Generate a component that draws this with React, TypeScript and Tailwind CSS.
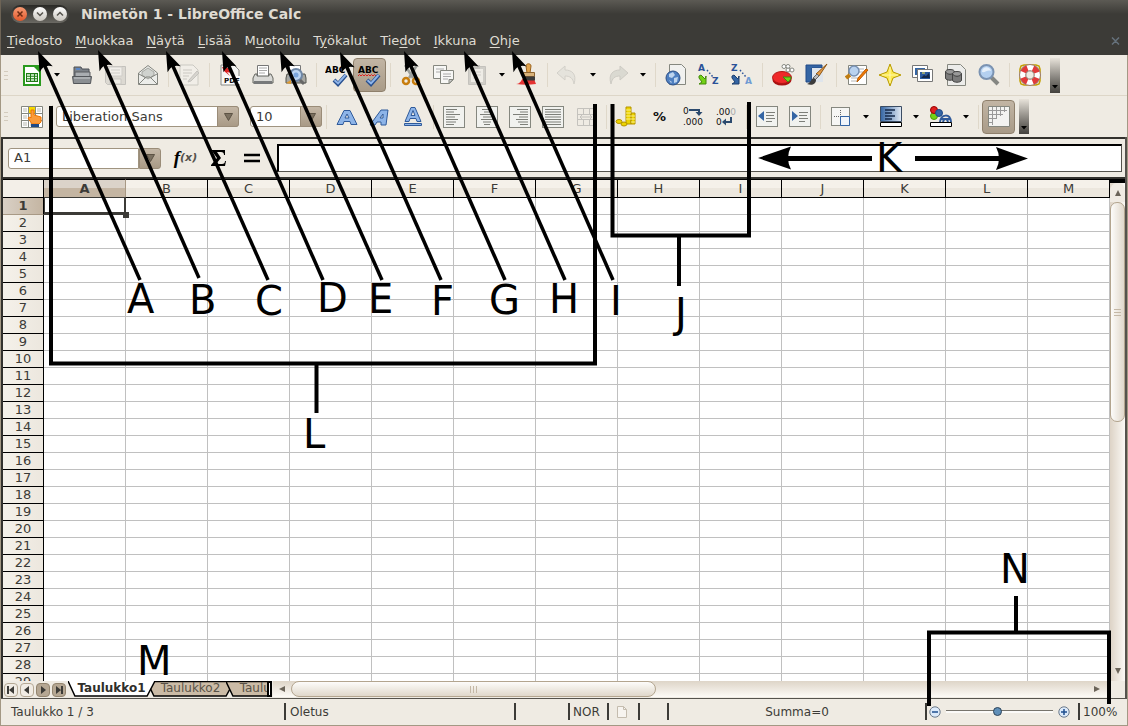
import { useState } from "react";
import type { ReactNode } from "react";

const MENUS: [string, string, string][] = [
  ["", "T", "iedosto"],
  ["", "M", "uokkaa"],
  ["", "N", "äytä"],
  ["", "L", "isää"],
  ["M", "u", "otoilu"],
  ["T", "y", "ökalut"],
  ["Tie", "d", "ot"],
  ["", "I", "kkuna"],
  ["", "O", "hje"],
];
const COLUMNS = "ABCDEFGHIJKLM".split("");
const ROWS = Array.from({ length: 29 }, (_, i) => i + 1);

function Icon({ children }: { children: ReactNode }) {
  return (
    <svg width="24" height="24" viewBox="0 0 24 24" fill="none" aria-hidden="true" className="shrink-0">
      {children}
    </svg>
  );
}

function Tool({ label, children, pressed, faded }: { label: string; children: ReactNode; pressed?: boolean; faded?: boolean }) {
  return (
    <button
      type="button"
      aria-label={label}
      aria-pressed={pressed}
      className={
        pressed
          ? "flex h-[34px] w-[33px] shrink-0 items-center justify-center rounded border border-[#8f806c] bg-linear-to-b from-[#c2b5a4] to-[#a99b88]"
          : faded
            ? "flex h-8 w-[33px] shrink-0 items-center justify-center opacity-35"
            : "flex h-8 w-[33px] shrink-0 items-center justify-center"
      }
    >
      <Icon>{children}</Icon>
    </button>
  );
}

function Drop({ label }: { label: string }) {
  return (
    <button type="button" aria-label={label} className="flex h-8 w-[17px] shrink-0 items-center justify-center">
      <svg width="6" height="4" viewBox="0 0 6 4" aria-hidden="true">
        <path d="M0 0h6L3 3.5z" fill="#000" />
      </svg>
    </button>
  );
}

function Sep() {
  return (
    <div className="flex w-2 shrink-0 justify-center">
      <div className="h-6 w-px bg-[#dfd8ca]" />
    </div>
  );
}

function Grip() {
  return (
    <div className="flex w-[14px] shrink-0 flex-col gap-[3px] pl-[3px]">
      <div className="h-px w-1 bg-[#d3cbbd]" />
      <div className="h-px w-1 bg-[#d3cbbd]" />
      <div className="h-px w-1 bg-[#d3cbbd]" />
    </div>
  );
}

function Overflow({ label }: { label: string }) {
  return (
    <button
      type="button"
      aria-label={label}
      className="ml-1 flex h-[35px] w-[10px] shrink-0 items-end justify-center bg-linear-to-b from-[#e8e3da] to-[#44423e] pb-1"
    >
      <svg width="6" height="4" viewBox="0 0 6 4" aria-hidden="true">
        <path d="M0 0h6L3 3.5z" fill="#000" />
      </svg>
    </button>
  );
}

const page = <path d="M3 2h13l5 5v15H3z" fill="#f6f6f4" stroke="#8a8c88" />;
const check = <path d="M9 17l4 4 8-9" stroke="#274f8f" strokeWidth="4" />;
const checkLight = <path d="M9.5 17.3l3.5 3 7.500-8.300" stroke="#8fb4e8" strokeWidth="2" />;

function Bitmap({ x, y, children, fill, size = 9 }: { x: number; y: number; children: string; fill: string; size?: number }) {
  return (
    <text x={x} y={y} fontFamily="DejaVu Sans" fontWeight="bold" fontSize={size} fill={fill}>
      {children}
    </text>
  );
}

function AlignIcon({ rows }: { rows: [number, number][] }) {
  return (
    <>
      <rect x="1.500" y="1.500" width="21" height="21" fill="#f1f2ef" stroke="#85877f" />
      {rows.map(([from, to], i) => (
        <path key={i} d={`M${from} ${4.5 + i * 2.5}H${to}`} stroke="#7d7f79" />
      ))}
    </>
  );
}

function StandardToolbar() {
  return (
    <div role="toolbar" aria-label="Standard" className="flex h-[41px] items-center overflow-hidden border-b border-[#ddd6c8] bg-[#efebe3]">
      <Grip />
      <Tool label="Uusi">
        <path d="M4 3h12l4 4v15H4z" fill="#fff" stroke="#2a9a1e" strokeWidth="2" />
        <path d="M12 2h9v9z" fill="#2a9a1e" />
        <path d="M6 10h12v9H6z" fill="#1f7a15" />
        <path d="M7 12h3m1 0h3m1 0h2M7 14.500h3m1 0h3m1 0h2M7 17h3m1 0h3m1 0h2" stroke="#e9fbe6" strokeWidth="1.500" />
      </Tool>
      <Drop label="Uusi – valikko" />
      <Tool label="Avaa">
        <path d="M4 4h7l1 2h7v9H4z" fill="#7d8288" stroke="#4c5056" />
        <path d="M6 5h4v2H6z" fill="#5b86c4" />
        <path d="M5 9h15v6H5z" fill="#a9adb1" stroke="#5a5d61" />
        <path d="M2.500 13.500h19l-1 7h-17z" fill="#8b8f93" stroke="#53565a" />
        <path d="M4 15h16" stroke="#c9ccce" />
      </Tool>
      <Tool label="Tallenna" faded>
        <path d="M2.500 3.500h20v18h-18l-2-2z" fill="#b9b9b5" stroke="#777" />
        <path d="M6 4h13v9H6z" fill="#f5f5f5" stroke="#999" />
        <path d="M8 7h9M8 10h9" stroke="#999" />
        <path d="M7 16h11v5H7z" fill="#eee" stroke="#888" />
      </Tool>
      <Tool label="Lähetä sähköpostina">
        <path d="M2.500 10L12 2.500 21.500 10v11.500h-19z" fill="#ecedea" stroke="#83857f" />
        <path d="M6 9l6-4 6 4v3l-6 4-6-4z" fill="#cfd2ce" stroke="#a5a7a2" />
        <path d="M3 21l7-7h4l7 7M3 11l7 4m11-4l-7 4" stroke="#83857f" />
      </Tool>
      <Sep />
      <Tool label="Muokkaa tiedostoa" faded>
        {page}
        <path d="M6 7h9M6 10h9M6 13h6M6 16h4" stroke="#888" />
        <path d="M12 17l8-9 2 2-8 8-3 1z" fill="#aaa" stroke="#777" />
      </Tool>
      <Sep />
      <Tool label="Vie PDF">
        {page}
        <path d="M4 4l6 1 3 5-4-1 3 4-6-5z" fill="#d22" />
        <rect x="7" y="13" width="15" height="8" fill="#fff" />
        <Bitmap x={6} y={20} fill="#111" size={7}>PDF</Bitmap>
      </Tool>
      <Tool label="Tulosta">
        <path d="M6.500 13V2.500h11V13" fill="#fff" stroke="#777" />
        <path d="M8 5h8M8 7.500h8M8 10h6" stroke="#aaa" />
        <path d="M4 11h2v2h12v-2h2l2 4v5H2v-5z" fill="#d9d9d6" stroke="#63655f" />
        <path d="M3 18h18v3H3z" fill="#77797a" />
      </Tool>
      <Tool label="Tulostuksen esikatselu">
        <path d="M5.500 12V2.500h11V12" fill="#fff" stroke="#777" />
        <path d="M3 11h18l1 4v5H2v-5z" fill="#a6a7a3" stroke="#53554f" />
        <circle cx="12" cy="12" r="6" fill="#bcd5f2" stroke="#6f87a5" strokeWidth="2" />
        <circle cx="12" cy="12" r="2.500" fill="#7ba5dc" />
        <path d="M16 17l4 4" stroke="#666" strokeWidth="3" />
        <path d="M2 20l5-3v4z" fill="#e09a2e" />
      </Tool>
      <Sep />
      <Tool label="Oikoluku">
        <Bitmap x={0} y={10} fill="#000">ABC</Bitmap>
        {check}
        {checkLight}
      </Tool>
      <Tool label="Automaattinen oikoluku" pressed>
        <Bitmap x={0} y={10} fill="#000">ABC</Bitmap>
        <path d="M0 13l1.500-1.500L3 13l1.500-1.500L6 13l1.500-1.500L9 13l1.500-1.500L12 13l1.500-1.500L15 13l1.500-1.500L18 13" stroke="#e02020" />
        {check}
        {checkLight}
      </Tool>
      <Sep />
      <Tool label="Leikkaa">
        <path d="M6 2l8 13M18 2l-8 13" stroke="#9da09c" strokeWidth="2.500" />
        <circle cx="7" cy="18" r="3" stroke="#c77d0e" strokeWidth="2.500" />
        <circle cx="17" cy="18" r="3" stroke="#c77d0e" strokeWidth="2.500" />
      </Tool>
      <Tool label="Kopioi">
        <path d="M1.500 2.500h13v13h-13z" fill="#f7f7f5" stroke="#85877f" />
        <path d="M4 6h8M4 9h4" stroke="#aaa" />
        <path d="M8.500 7.500h13v9l-4 4h-9z" fill="#f7f7f5" stroke="#85877f" />
        <path d="M11 11h8M11 13.500h8M11 16h5" stroke="#aaa" />
        <path d="M21 16.500h-4v4z" fill="#ccc" stroke="#85877f" />
      </Tool>
      <Tool label="Liitä" faded>
        <path d="M3.500 3.500h17v18h-17z" fill="#999" stroke="#777" />
        <path d="M6 6h12v13H6z" fill="#eee" />
        <path d="M9 2h6v4H9z" fill="#777" />
        <path d="M8 9h8M8 12h8M8 15h5" stroke="#999" />
      </Tool>
      <Drop label="Liitä – valikko" />
      <Tool label="Muotoilusivellin">
        <path d="M1 21c5 0 5-5 8-6l10 1 2 5c-7 1-13 1-20 0z" fill="#e43333" />
        <path d="M11 3c0-3 5-3 5 0l-1 7h-3z" fill="#e0a24c" stroke="#9b6420" />
        <path d="M8.500 9.500h11v4h-11z" fill="#d8b27a" stroke="#8d6330" />
        <path d="M8 13.500h12v4H8z" fill="#3b3b3b" />
      </Tool>
      <Sep />
      <Tool label="Kumoa" faded>
        <path d="M1 10l8-7v4c7 0 12 4 9 14-1-6-4-8-9-8v4z" fill="#d5d5d0" stroke="#9f9f9a" />
      </Tool>
      <Drop label="Kumoa – valikko" />
      <Tool label="Tee uudelleen" faded>
        <path d="M22 10l-8-7v4C7 7 2 11 5 21c1-6 4-8 9-8v4z" fill="#b5b8b0" stroke="#8f8f8a" />
      </Tool>
      <Drop label="Tee uudelleen – valikko" />
      <Sep />
      <Tool label="Hyperlinkki">
        <path d="M5.500 1.500h12l4 4v16h-16z" fill="#f1f1ef" stroke="#85877f" />
        <circle cx="9" cy="15" r="7" fill="#4e7fc0" stroke="#2c4f86" />
        <path d="M5 11l4-2 2 3-3 3-3-1zM10 15l4-1-1 5-3 1zM5 17l3 2-1 1z" fill="#bdd4ee" />
      </Tool>
      <Tool label="Lajittele nousevasti">
        <Bitmap x={1} y={8} fill="#2a5298">A</Bitmap>
        <path d="M10 7l6 7" stroke="#2a5298" strokeWidth="1.500" strokeDasharray="1.500 2" />
        <path d="M2 13l2-1 4 4 1-3v8H2l3-2-3-4z" fill="#73d216" stroke="#438a0a" />
        <Bitmap x={15} y={21} fill="#2a5298">Z</Bitmap>
      </Tool>
      <Tool label="Lajittele laskevasti">
        <Bitmap x={1} y={8} fill="#2a5298">Z</Bitmap>
        <path d="M10 7l6 7" stroke="#2a5298" strokeWidth="1.500" strokeDasharray="1.500 2" />
        <path d="M2 13l2-1 4 4 1-3v8H2l3-2-3-4z" fill="#3465a4" stroke="#1d3f6e" />
        <Bitmap x={15} y={21} fill="#6f9bd3">A</Bitmap>
      </Tool>
      <Sep />
      <Tool label="Kaavio">
        <ellipse cx="11" cy="17" rx="9.500" ry="5.500" fill="#a81111" />
        <ellipse cx="11" cy="14.500" rx="9.500" ry="6" fill="#ef2929" stroke="#b31515" />
        <path d="M12 14h8c0 3-2 4-3 5z" fill="#73d216" stroke="#3f8a10" />
        <g fill="#fff" stroke="#85877f">
          <circle cx="13" cy="3.500" r="2" />
          <circle cx="17" cy="3.500" r="2" />
          <circle cx="17" cy="7" r="2" />
          <circle cx="21" cy="7" r="2" />
        </g>
      </Tool>
      <Tool label="Näytä piirtotoiminnot">
        <path d="M2 2h16v3H8v14H2z" fill="#3465a4" stroke="#204a87" />
        <path d="M8 5h11v14H8z" fill="#dfe5ec" />
        <path d="M23 1l-8 12-3-2z" fill="#e39a48" stroke="#8f5714" />
        <path d="M13 11l2 2-4 4-2-2z" fill="#bbb" stroke="#666" />
        <path d="M10 15c-3 0-2 4-7 6 5 2 9 0 9-4z" fill="#3c3c3c" />
      </Tool>
      <Sep />
      <Tool label="Etsi ja korvaa">
        <path d="M3.500 2.500h18v19h-18z" fill="#fff" stroke="#85877f" />
        <path d="M13 6h6M13 9h5M6 15h7M6 18h6" stroke="#b5b5b5" />
        <circle cx="9" cy="8" r="5" fill="#b9d2ef" stroke="#7790b3" strokeWidth="1.500" />
        <path d="M5 12l-4 3" stroke="#c17d11" strokeWidth="4" />
        <path d="M23 7l-9 10-2 2 1-4 8-9z" fill="#f57900" stroke="#b85a00" />
      </Tool>
      <Tool label="Siirtymisapuri">
        <path d="M12 1l3 8 8 3-8 3-3 8-3-8-8-3 8-3z" fill="#fce94f" stroke="#b89a00" />
        <path d="M12 4v16M4 12h16" stroke="#fff7b0" />
      </Tool>
      <Tool label="Galleria">
        <path d="M1.500 2.500h15v12h-15z" fill="#fff" stroke="#777" />
        <path d="M4 5h10v7H4z" fill="#3465a4" />
        <path d="M6.500 6.500h15v12h-15z" fill="#fff" stroke="#777" />
        <path d="M9 9h10v7H9z" fill="#2c5a9e" />
        <path d="M10 15l3-3 2 1 3-3 1 5z" fill="#14294a" />
        <path d="M11 10h3" stroke="#fce94f" />
      </Tool>
      <Tool label="Tietolähteet">
        <path d="M3.500 1.500h13l5 5v16h-18z" fill="#ececea" stroke="#85877f" />
        <ellipse cx="6" cy="9" rx="4.500" ry="2.500" fill="#999" stroke="#444" />
        <path d="M1.500 9v6c0 3 9 3 9 0V9c-2 3-7 3-9 0z" fill="#7b7b7b" stroke="#444" />
        <ellipse cx="13" cy="11" rx="4.500" ry="2.500" fill="#999" stroke="#444" />
        <path d="M8.500 11v6c0 3 9 3 9 0v-6c-2 3-7 3-9 0z" fill="#7b7b7b" stroke="#444" />
      </Tool>
      <Tool label="Zoomaus">
        <path d="M14 14l7 7" stroke="#858783" strokeWidth="4" />
        <circle cx="9.500" cy="9" r="7" fill="#b4d0f0" stroke="#7b93b2" strokeWidth="2" />
        <path d="M5 9c0-6 8-6 9-1-3-2-6 2-9 1z" fill="#e6f0fb" />
      </Tool>
      <Sep />
      <Tool label="Ohje">
        <path d="M3 3l3-1 12 0 3 1 1 3v12l-1 3-3 1H6l-3-1-1-3V6z" stroke="#c4a000" strokeWidth="1.500" />
        <circle cx="12" cy="12" r="7.500" stroke="#fff" strokeWidth="6" />
        <circle cx="12" cy="12" r="7.500" stroke="#e23a3a" strokeWidth="6" strokeDasharray="6 5.780" strokeDashoffset="-2.900" />
        <circle cx="12" cy="12" r="4.200" fill="#efebe3" stroke="#8b6d62" />
        <circle cx="12" cy="12" r="10.500" stroke="#9a7a70" />
      </Tool>
      <Overflow label="Lisää painikkeita" />
    </div>
  );
}

function FormatToolbar() {
  const letter = (skew: boolean, underline: boolean) => (
    <>
      <path
        d={
          skew
            ? "M2 20l11-15h7l-2 15h-5v-3h-4l-2 3zM12 13h3V9z"
            : underline
              ? "M4 16.500l6-14h4l6 14h-4l-1-3H9l-1 3zM10 10.500h4l-2-5z"
              : "M2 19.500l7-14h6l7 14h-6l-1-3H9l-1 3zM10 13h4l-2-4z"
        }
        fill="#8db4e8"
        fillRule="evenodd"
        stroke="#2f5a9a"
      />
      {underline && <path d="M3.500 18.500h17v2h-17z" fill="#8db4e8" stroke="#2f5a9a" />}
    </>
  );
  return (
    <div role="toolbar" aria-label="Muotoilu" className="flex h-[41px] items-center overflow-hidden bg-[#efebe3]">
      <Grip />
      <Tool label="Tyylit ja muotoilu">
        <path d="M1.500 1.500h21v21h-21z" fill="#fff" stroke="#85877f" />
        <path d="M3 3h4v4H3zM3 10h4v4H3zM3 17h4v4H3zM17 3h4v4h-4zM10 17h4v4h-4z" fill="#dcdcd8" />
        <path d="M1 8.500h22M1 15.500h22M8.500 1v22M15.500 1v22" stroke="#85877f" />
        <path d="M9 2h6v6H9z" fill="#f5d800" />
        <path d="M11 5h3v5l7 2v5l-2 2h-7l-4-6 2-1 1 1z" fill="#fa9a3a" stroke="#ee7400" />
        <path d="M11 19h8v3h-8z" fill="#204a87" />
      </Tool>
      <Sep />
      <div className="relative h-[21px] w-[183px] shrink-0">
        <select aria-label="Fontin nimi" className="block h-full w-full appearance-none rounded-[3px] border border-[#a09480] bg-white pl-[5px] text-[13px] leading-none text-[#3c3b37]">
          <option>Liberation Sans</option>
          <option>DejaVu Sans</option>
        </select>
        <SelectArrow />
      </div>
      <div className="relative ml-[11px] h-[21px] w-[72px] shrink-0">
        <select aria-label="Fonttikoko" className="block h-full w-full appearance-none rounded-[3px] border border-[#a09480] bg-white pl-[5px] text-[13px] leading-none text-[#3c3b37]">
          <option>10</option>
          <option>12</option>
        </select>
        <SelectArrow />
      </div>
      <Sep />
      <Tool label="Lihavointi">{letter(false, false)}</Tool>
      <Tool label="Kursivointi">{letter(true, false)}</Tool>
      <Tool label="Alleviivaus">{letter(false, true)}</Tool>
      <Sep />
      <Tool label="Tasaa vasemmalle">
        <AlignIcon rows={[[4, 15], [4, 12], [4, 18], [4, 13], [4, 16], [4, 14], [4, 12]]} />
      </Tool>
      <Tool label="Keskitä">
        <AlignIcon rows={[[7, 17], [9, 15], [5, 19], [8, 16], [6, 18], [8, 16], [9, 15]]} />
      </Tool>
      <Tool label="Tasaa oikealle">
        <AlignIcon rows={[[9, 20], [12, 20], [5, 20], [11, 20], [8, 20], [10, 20], [12, 20]]} />
      </Tool>
      <Tool label="Tasaa molemmat reunat">
        <AlignIcon rows={[[4, 20], [4, 20], [4, 20], [4, 20], [4, 20], [4, 20], [4, 20]]} />
      </Tool>
      <Tool label="Yhdistä solut" faded>
        <path d="M3.500 3.500h17v17h-17zM3 9.500h18M3 14.500h18M9.500 3v6M15.500 3v6M9.500 15v6M15.500 15v6M6 12h12M8 10l-2 2 2 2M16 10l2 2-2 2" stroke="#777" />
      </Tool>
      <Sep />
      <Tool label="Valuutta">
        <path d="M11 2h5v17h-5zM16 8h4v11h-4z" fill="#edd400" stroke="#b59400" />
        <path d="M11 5h5M11 8h5M11 11h5M11 14h5M16 11h4M16 14h4M16 17h4" stroke="#fbf08a" />
        <ellipse cx="4" cy="16.500" rx="3" ry="2" fill="#edd400" stroke="#b59400" />
        <ellipse cx="9" cy="19" rx="3" ry="2" fill="#edd400" stroke="#b59400" />
      </Tool>
      <Tool label="Prosentti">
        <Bitmap x={5} y={16} fill="#111" size={13}>%</Bitmap>
      </Tool>
      <Tool label="Lisää desimaali">
        <text x="2" y="9" fontFamily="DejaVu Sans" fontSize="9" fill="#111">0</text>
        <path d="M8 5h10v4" stroke="#2c4a6e" strokeWidth="2" />
        <path d="M14.500 7h7L18 11z" fill="#2c4a6e" />
        <text x="2" y="20" fontFamily="DejaVu Sans" fontSize="9" fill="#111">.000</text>
      </Tool>
      <Tool label="Poista desimaali">
        <text x="2" y="10" fontFamily="DejaVu Sans" fontSize="9" fill="#111">.00<tspan fill="#aaa">0</tspan></text>
        <text x="2" y="20" fontFamily="DejaVu Sans" fontSize="9" fill="#111">0</text>
        <path d="M17 12v5h-6" stroke="#2c4a6e" strokeWidth="2" />
        <path d="M12 13.500v7L8 17z" fill="#2c4a6e" />
      </Tool>
      <Sep />
      <Tool label="Pienennä sisennystä">
        <rect x="1.500" y="1.500" width="21" height="20" fill="#f1f2ef" stroke="#85877f" />
        <path d="M9 6v10l-6-5z" fill="#3465a4" />
        <path d="M11 7.500h9M11 10.500h8M11 13.500h9M11 16.500h6" stroke="#7d7f79" />
      </Tool>
      <Tool label="Suurenna sisennystä">
        <rect x="1.500" y="1.500" width="21" height="20" fill="#f1f2ef" stroke="#85877f" />
        <path d="M4 6v10l6-5z" fill="#3465a4" />
        <path d="M11 7.500h9M11 10.500h8M11 13.500h9M11 16.500h6" stroke="#7d7f79" />
      </Tool>
      <Sep />
      <Tool label="Reunat">
        <rect x="2.500" y="2.500" width="18" height="18" fill="#f6f6f4" stroke="#85877f" />
        <path d="M5 11.500h14M11.500 5v14" stroke="#666" strokeDasharray="1 1" />
        <path d="M11.500 11.500h9v9h-9z" fill="#f1f5fa" stroke="#3465a4" />
      </Tool>
      <Drop label="Reunat – valikko" />
      <Tool label="Taustaväri">
        <defs>
          <linearGradient id="background-swatch">
            <stop offset="0" stopColor="#3465a4" />
            <stop offset="1" stopColor="#e3ebf5" />
          </linearGradient>
        </defs>
        <path d="M1.500 1.500h21v15h-21z" fill="url(#background-swatch)" stroke="#3b4c63" />
        <path d="M6 5h10M6 8h7M6 11h10M6 14h7" stroke="#14294a" strokeWidth="1.500" />
        <path d="M1.500 17.500h21v4h-21z" fill="#fff" stroke="#000" />
      </Tool>
      <Drop label="Taustaväri – valikko" />
      <Tool label="Fontin väri">
        <circle cx="5" cy="11" r="3.500" fill="#73d216" stroke="#4e9a06" />
        <circle cx="5" cy="5" r="3.500" fill="#e02020" stroke="#900" />
        <circle cx="10" cy="8" r="3.500" fill="#3465a4" stroke="#204a87" />
        <path d="M11 17c1-8 10-9 11 0M14 17c1-4 4-4 5 0M12 14h9" stroke="#2f5a9a" strokeWidth="2" />
        <path d="M1.500 17.500h21v4h-21z" fill="#fff" stroke="#000" />
      </Tool>
      <Drop label="Fontin väri – valikko" />
      <Sep />
      <Tool label="Ruudukkoviivat" pressed>
        <path d="M1.500 1.500h21v20h-21z" fill="#f3f3f1" stroke="#85877f" />
        <path d="M2 5.500h18M2 9.500h14M2 13.500h8M2 17.500h4M5.500 2v18M9.500 2v12M13.500 2v9M17.500 2v5" stroke="#999" />
      </Tool>
      <Overflow label="Lisää muotoilupainikkeita" />
    </div>
  );
}

function SelectArrow() {
  return (
    <span className="pointer-events-none absolute inset-y-0 right-0 flex w-[22px] items-center justify-center rounded-r-[3px] border border-[#9a8c78] bg-linear-to-b from-[#c4b7a6] to-[#a99a86]">
      <TriangleDown />
    </span>
  );
}

function TriangleDown() {
  return (
    <svg width="9" height="8" viewBox="0 0 9 8" aria-hidden="true">
      <path d="M.5.5h8l-4 7z" fill="#7b7060" stroke="#5d5344" />
    </svg>
  );
}

function FormulaBar() {
  return (
    <div className="flex h-[42px] items-center border-y-2 border-[#33322e] bg-[#efebe3] pr-[3px] pl-[5px]">
      <div className="flex h-[21px] w-[153px] shrink-0">
        <input aria-label="Nimiruutu" defaultValue="A1" className="w-0 flex-1 rounded-l-[3px] border border-[#a09480] bg-white pl-[5px] text-[13px] text-[#3c3b37]" />
        <button type="button" aria-label="Valitse alue" className="flex w-[22px] items-center justify-center rounded-r-[3px] border border-[#9a8c78] bg-linear-to-b from-[#c4b7a6] to-[#a99a86]">
          <TriangleDown />
        </button>
      </div>
      <div className="ml-2 flex w-[108px] shrink-0">
        <button type="button" aria-label="Ohjattu funktion luonti" className="flex h-7 w-[33px] items-center justify-center font-['Liberation_Serif',serif] text-[19px] font-bold italic text-black">
          f<span className="font-['DejaVu_Sans',sans-serif] text-[11px] text-[#55534d]">(x)</span>
        </button>
        <button type="button" aria-label="Summa" className="flex h-7 w-[33px] items-center justify-center">
          <svg width="18" height="18" viewBox="0 0 18 18" aria-hidden="true">
            <path d="M2 1h13v5h-1c0-2-1-3-3-3H7l4 6-5 6h6c2 0 3-1 3-3h1l-1 5H1v-1l6-7-5-7z" fill="#000" />
          </svg>
        </button>
        <button type="button" aria-label="Funktio" className="flex h-7 w-[33px] items-center justify-center">
          <svg width="17" height="10" viewBox="0 0 17 10" aria-hidden="true">
            <path d="M1 2h16M1 8h16" stroke="#000" strokeWidth="2.500" />
          </svg>
        </button>
      </div>
      <input aria-label="Syöttörivi" className="h-7 min-w-0 flex-1 border border-t-2 border-l-2 border-[#55534d] border-t-black border-l-black bg-white px-1 text-[13px]" />
    </div>
  );
}

function Sheet() {
  return (
    <div className="min-h-0 flex-1 overflow-hidden">
      <table className="w-full table-fixed border-separate border-spacing-0 text-center text-[13px] leading-4 text-[#3c3b37]">
        <colgroup>
          <col className="w-[41px]" />
          {COLUMNS.map((c) => (
            <col key={c} />
          ))}
        </colgroup>
        <thead>
          <tr>
            <th aria-label="Valitse kaikki" className="h-[19px] border-t border-r border-b border-black bg-[#f3efe8] p-0" />
            {COLUMNS.map((c) => (
              <th
                key={c}
                scope="col"
                className={
                  c === "A"
                    ? "h-[19px] border-t border-r border-b border-t-black border-r-[#a89985] border-b-black bg-linear-to-b from-[#dbd3c9] from-50% to-[#c4b5a2] to-50% p-0 font-bold"
                    : "h-[19px] border-t border-r border-b border-black bg-linear-to-b from-[#f5f1ea] from-50% to-[#ece7de] to-50% p-0 font-normal"
                }
              >
                {c}
              </th>
            ))}
          </tr>
        </thead>
        <tbody>
          {ROWS.map((r) => (
            <tr key={r}>
              <th
                scope="row"
                className={
                  r === 1
                    ? "h-[17px] border-r border-b border-r-black border-b-[#a89985] bg-linear-to-r from-[#d9d0c5] to-[#c4b5a2] p-0 font-bold"
                    : "h-[17px] border-r border-b border-black bg-linear-to-r from-[#f5f1ea] to-[#ece7de] p-0 font-normal"
                }
              >
                {r}
              </th>
              {COLUMNS.map((c) => (
                <td key={c} className="relative h-[17px] border-r border-b border-[#c0c0c0] bg-white p-0">
                  {r === 1 && c === "A" && (
                    <span className="absolute -top-px -right-px -bottom-px left-0 z-10 border border-r-2 border-b-[3px] border-[#3c3b37]">
                      <span className="absolute -right-[5px] -bottom-[6px] size-[6px] bg-[#3c3b37]" />
                    </span>
                  )}
                </td>
              ))}
            </tr>
          ))}
        </tbody>
      </table>
    </div>
  );
}

function Arrow({ dir }: { dir: "up" | "down" | "left" | "right" }) {
  const d = { up: "M0 6L3 0l3 6z", down: "M0 0h6L3 6z", left: "M6 0v6L0 3z", right: "M0 0v6l6-3z" }[dir];
  return (
    <svg width="6" height="6" viewBox="0 0 6 6" aria-hidden="true">
      <path d={d} fill="#6b6459" />
    </svg>
  );
}

function VerticalScroll() {
  return (
    <div className="flex w-[15px] shrink-0 flex-col border-t-4 border-black bg-linear-to-r from-[#ddd3c6] to-[#fbf9f5]">
      <button type="button" aria-label="Vieritä ylös" className="flex h-[19px] items-center justify-center rounded-t-lg bg-[#f0ebe3]">
        <Arrow dir="up" />
      </button>
      <div className="min-h-0 flex-1">
        <div className="flex h-[48%] flex-col items-center justify-center gap-[2px] rounded-[7px] border border-[#b3a58f] bg-linear-to-r from-[#fdfcfa] to-[#e0d8cb]">
          <div className="h-px w-[7px] bg-[#c4b8a6]" />
          <div className="h-px w-[7px] bg-[#c4b8a6]" />
          <div className="h-px w-[7px] bg-[#c4b8a6]" />
        </div>
      </div>
      <button type="button" aria-label="Vieritä alas" className="flex h-5 items-center justify-center">
        <Arrow dir="down" />
      </button>
    </div>
  );
}

function TabNav({ label, d, dark }: { label: string; d: string; dark?: boolean }) {
  return (
    <button
      type="button"
      aria-label={label}
      className={
        dark
          ? "flex h-[14px] w-[14px] items-center justify-center rounded-[4px] border border-[#93856f] bg-[#b5a793]"
          : "flex h-[14px] w-[14px] items-center justify-center rounded-[4px] border border-[#b5a995] bg-[#f1ece4]"
      }
    >
      <svg width="8" height="8" viewBox="0 0 8 8" aria-hidden="true">
        <path d={d} fill="#3c3b37" />
      </svg>
    </button>
  );
}

function SheetTabs() {
  const [active, setActive] = useState(0);
  const tabs = ["Taulukko1", "Taulukko2", "Taulukko3"];
  return (
    <div className="flex h-[17px] bg-[#efebe3]">
      <div className="flex w-[65px] shrink-0 items-center gap-[2px] pl-px">
        <TabNav label="Ensimmäinen taulukko" d="M0 0h2v8H0zM7 0v8L2 4z" />
        <TabNav label="Edellinen taulukko" d="M6 0v8L1 4z" />
        <TabNav label="Seuraava taulukko" d="M2 0v8l5-4z" dark />
        <TabNav label="Viimeinen taulukko" d="M6 0h2v8H6zM1 0v8l5-4z" dark />
      </div>
      <div role="tablist" className="flex w-[199px] shrink-0 overflow-hidden">
        {tabs.map((t, i) => (
          <button
            key={t}
            role="tab"
            type="button"
            aria-selected={active === i}
            onClick={() => setActive(i)}
            className={
              active === i
                ? "relative z-10 -mr-2 flex h-4 w-[87px] shrink-0 justify-center text-[12px] leading-[14px] font-bold text-[#2f2e2a]"
                : "relative -mr-2 flex h-4 w-[87px] shrink-0 justify-center text-[12px] leading-[14px] text-[#5a5348]"
            }
          >
            <svg className="absolute inset-0 h-full w-full" viewBox="0 0 88 16" preserveAspectRatio="none" aria-hidden="true">
              <path d={active === i ? "M0 0l7 15h73l8-15z" : "M0 1l7 14h73l8-14z"} fill={active === i ? "#fff" : "#cbbba6"} />
              <path d={active === i ? "M0 0l7 15h73l8-15" : "M0 .5h88l-8 14.500H7L0 .5"} fill="none" stroke="#000" strokeWidth="1.500" />
            </svg>
            <span className="relative">{t}</span>
          </button>
        ))}
      </div>
      <div className="mr-px h-4 w-[5px] shrink-0 border-2 border-black bg-white" />
      <div className="flex h-4 min-w-0 flex-1 items-center bg-linear-to-b from-[#ded5c8] to-[#fcfaf6]">
        <button type="button" aria-label="Vieritä vasemmalle" className="flex h-4 w-[18px] items-center justify-center">
          <Arrow dir="left" />
        </button>
        <div className="min-w-0 flex-1">
          <div className="flex h-4 w-[46%] items-center justify-center gap-[2px] rounded-lg border border-[#b3a58f] bg-linear-to-b from-[#fdfcfa] to-[#e0d8cb]">
            <div className="h-[7px] w-px bg-[#c4b8a6]" />
            <div className="h-[7px] w-px bg-[#c4b8a6]" />
            <div className="h-[7px] w-px bg-[#c4b8a6]" />
          </div>
        </div>
        <button type="button" aria-label="Vieritä oikealle" className="flex h-4 w-[26px] items-center justify-center">
          <Arrow dir="right" />
        </button>
      </div>
      <div className="w-[15px] shrink-0" />
    </div>
  );
}

function ZoomButton({ label, d }: { label: string; d: string }) {
  return (
    <button type="button" aria-label={label} className="shrink-0">
      <svg width="12" height="12" viewBox="0 0 12 12" aria-hidden="true">
        <circle cx="6" cy="6" r="5.200" fill="#dceafa" stroke="#6c7a8b" />
        <path d={d} stroke="#1f4f8f" strokeWidth="1.500" />
      </svg>
    </button>
  );
}

function StatusBar() {
  const cell = "flex h-[17px] shrink-0 items-center border-l-2 border-[#3c3b37]";
  return (
    <footer className="flex h-[27px] shrink-0 items-center border-t border-[#55534d] bg-[#efebe3] pb-px text-[12px] text-[#3c3b37]">
      <div className="w-[283px] shrink-0 pl-[10px]">Taulukko 1 / 3</div>
      <div className={`${cell} w-[230px] pl-1`}>Oletus</div>
      <div className={`${cell} w-[54px] pl-1`} />
      <div className={`${cell} w-[39px] pl-[3px]`}>NOR</div>
      <div className={`${cell} w-[31px] pl-[7px]`}>
        <svg width="12" height="12" viewBox="0 0 12 12" aria-hidden="true">
          <path d="M1.500.5h6l3 3v8h-9z" fill="#f7f4ef" stroke="#c4bcae" />
          <path d="M7.500.5v3h3" fill="none" stroke="#c4bcae" />
        </svg>
      </div>
      <div className={`${cell} w-[29px]`} />
      <div className="flex h-[17px] min-w-0 flex-1 items-center justify-center border-l-2 border-[#3c3b37]">Summa=0</div>
      <div className={`${cell} w-[153px] gap-[5px] pl-[2px]`}>
        <ZoomButton label="Loitonna" d="M3 6h6" />
        <input
          type="range"
          aria-label="Zoomaus"
          min={20}
          max={180}
          defaultValue={97}
          className="h-3 w-[107px] appearance-none bg-transparent [&::-webkit-slider-runnable-track]:h-[3px] [&::-webkit-slider-runnable-track]:border-t [&::-webkit-slider-runnable-track]:border-[#77746c] [&::-webkit-slider-runnable-track]:bg-[#fbfaf8] [&::-webkit-slider-thumb]:-mt-[4px] [&::-webkit-slider-thumb]:size-[9px] [&::-webkit-slider-thumb]:appearance-none [&::-webkit-slider-thumb]:rounded-full [&::-webkit-slider-thumb]:border [&::-webkit-slider-thumb]:border-[#2e4358] [&::-webkit-slider-thumb]:bg-[#5f8fb8]"
        />
        <ZoomButton label="Lähennä" d="M3 6h6M6 3v6" />
      </div>
      <div className={`${cell} w-[49px] pl-[3px]`}>100%</div>
    </footer>
  );
}

const POINTERS: [number, number, number, number][] = [
  [140, 280, 38, 51],
  [199, 278, 98, 50],
  [268, 280, 166, 51],
  [323, 280, 222, 51],
  [382, 280, 280, 51],
  [441, 280, 340, 52],
  [505, 280, 404, 51],
  [565, 280, 464, 51],
  [613, 280, 512, 51],
];
const LETTERS: [string, number, number][] = [
  ["A", 127, 313],
  ["B", 189, 314],
  ["C", 255, 315],
  ["D", 317, 312],
  ["E", 368, 313],
  ["F", 431, 315],
  ["G", 489, 314],
  ["H", 549, 313],
  ["I", 610, 315],
  ["J", 675, 327],
  ["K", 876, 172],
  ["L", 303, 448],
  ["M", 137, 675],
  ["N", 1000, 583],
];

function Annotations() {
  return (
    <svg width="1128" height="726" viewBox="0 0 1128 726" className="pointer-events-none absolute top-0 left-0 z-20">
      <g stroke="#000" strokeWidth="3.500">
        {POINTERS.map(([x, y, tx, ty]) => (
          <g key={tx}>
            <line x1={x} y1={y} x2={tx + 6} y2={ty + 13} />
            <path
              d="M0 0L20 7.200Q14 0 20-7.200z"
              fill="#000"
              stroke="none"
              transform={`translate(${tx} ${ty}) rotate(${(Math.atan2(y - ty, x - tx) * 180) / Math.PI})`}
            />
          </g>
        ))}
      </g>
      <g fill="none" stroke="#000" strokeWidth="4">
        <path d="M51 106v257.500h544V104M316.500 363v50" />
        <path d="M612.500 104v131.500H749V102M679 235v51" />
        <path d="M929 706v-73.500h180V704M1016 632v-36" />
        <path d="M872 158.500h-85M915 158.500h85" strokeWidth="5" />
      </g>
      <path d="M758 158l33-11.500q-6 11.500 0 23zM1028 158.500l-32-11.500q6 11.500 0 23z" />
      <g fontFamily="DejaVu Sans, sans-serif" fontSize="40">
        {LETTERS.map(([l, x, y]) => (
          <text key={l} x={x} y={y}>
            {l}
          </text>
        ))}
      </g>
    </svg>
  );
}

function WindowButton({ label, d, close }: { label: string; d: string; close?: boolean }) {
  return (
    <button
      type="button"
      aria-label={label}
      className={
        close
          ? "flex size-[14px] items-center justify-center rounded-full bg-linear-to-b from-[#f79a73] to-[#e2582a]"
          : "flex size-[14px] items-center justify-center rounded-full bg-linear-to-b from-white to-[#c9c5be]"
      }
    >
      <svg width="8" height="8" viewBox="0 0 8 8" aria-hidden="true">
        <path d={d} fill="none" stroke={close ? "#6b2a12" : "#55534d"} strokeWidth="1.500" />
      </svg>
    </button>
  );
}

export default function App() {
  return (
    <div className="relative flex h-screen min-h-[400px] w-full flex-col overflow-hidden bg-[#3c3b37] font-['DejaVu_Sans',sans-serif]">
      <header className="shrink-0 border-l border-[#6d6355]">
        <div className="flex h-7 items-center bg-linear-to-b from-[#5c5a54] to-[#3c3b37] to-50% pl-[10px]">
          <div className="flex h-[18px] w-[58px] items-center justify-center gap-[6px] rounded-full bg-linear-to-b from-[#2a2926] to-[#6b6963]">
            <WindowButton label="Sulje" d="M1.500 1.500l5 5m0-5l-5 5" close />
            <WindowButton label="Pienennä" d="M1 2.500l3 3 3-3" />
            <WindowButton label="Suurenna" d="M1 5.500l3-3 3 3" />
          </div>
          <h1 className="ml-3 text-[14px] font-bold text-[#dfdbd2]">Nimetön 1 - LibreOffice Calc</h1>
        </div>
        <div className="flex h-[27px] items-center justify-between pr-2 pb-[2px] pl-[6px]">
          <nav aria-label="Päävalikko" className="flex gap-[13px] text-[13px] text-[#dfdbd2]">
            {MENUS.map(([a, b, c]) => (
              <button key={a + b + c} type="button">
                {a}
                <span className="underline underline-offset-2">{b}</span>
                {c}
              </button>
            ))}
          </nav>
          <button type="button" aria-label="Sulje asiakirja">
            <svg width="9" height="8" viewBox="0 0 9 8" aria-hidden="true">
              <path d="M1 .5l3.500 3.500L8 .5M1 7.500L4.500 4 8 7.500" fill="none" stroke="#66727c" strokeWidth="1.500" />
            </svg>
          </button>
        </div>
      </header>
      <main className="flex min-h-0 flex-1 flex-col border-r border-b border-l border-[#a39884] bg-[#efebe3]">
        <StandardToolbar />
        <FormatToolbar />
        <div className="flex min-h-0 flex-1 flex-col border-r-2 border-l-2 border-r-[#55534d] border-l-[#33322e]">
          <FormulaBar />
          <div className="flex min-h-0 flex-1">
            <Sheet />
            <VerticalScroll />
          </div>
          <SheetTabs />
        </div>
        <StatusBar />
      </main>
      <Annotations />
    </div>
  );
}
